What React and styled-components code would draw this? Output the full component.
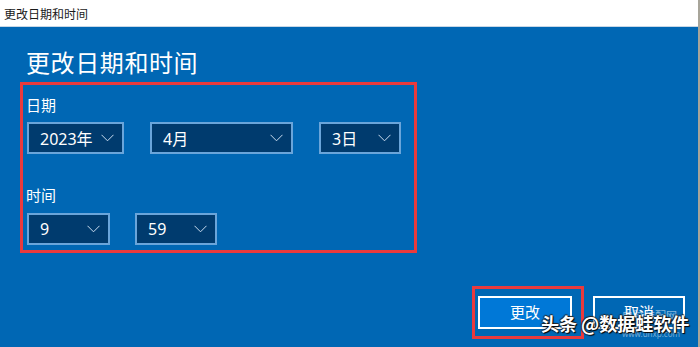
import React from 'react'
import styled, { createGlobalStyle } from 'styled-components'

const GlobalStyle = createGlobalStyle`
  html, body {
    margin: 0;
    padding: 0;
    background: #ffffff;
  }
  body {
    font-family: "Noto Sans", "Noto Sans CJK SC", sans-serif;
  }
`

const Window = styled.div`
  position: relative;
  width: 698px;
  height: 347px;
  border-right: 2px solid #a8a59a;
  display: flex;
  flex-direction: column;
  overflow: hidden;
`

const TitleBar = styled.div`
  height: 26px;
  flex: none;
  background: #ffffff;
  border-bottom: 1px solid #c7d7e6;
  display: flex;
  align-items: center;
  padding-left: 4px;
  font-family: "Noto Sans CJK SC", sans-serif;
  font-size: 12px;
  color: #1a1a1a;
`

const Body = styled.div`
  flex: 1;
  background: #0067b4;
  display: flex;
  flex-direction: column;
  color: #ffffff;
`

const Heading = styled.h1`
  margin: 18px 0 0 26px;
  font-family: "Noto Sans CJK SC", sans-serif;
  font-weight: 400;
  font-size: 24px;
  line-height: 34px;
  letter-spacing: 0.6px;
`

const Marked = styled.section`
  margin: 3px 0 0 20px;
  width: 388px;
  border: 3px solid #ea3a3d;
  padding: 10px 0 5px 3px;
  display: flex;
  flex-direction: column;
`

const Label = styled.div`
  font-family: "Noto Sans CJK SC", sans-serif;
  font-size: 15px;
  line-height: 20px;
  margin-top: ${p => p.$top || 0}px;
`

const Row = styled.div`
  display: flex;
  gap: ${p => p.$gap}px;
  margin-top: ${p => p.$top}px;
  padding-left: 1px;
`

const Select = styled.div`
  box-sizing: border-box;
  width: ${p => p.$w}px;
  height: 32px;
  background: #003b6e;
  border: 2px solid #6aa5da;
  display: flex;
  align-items: center;
  justify-content: space-between;
  padding: 0 8px 0 11px;
  font-family: "Noto Sans", "Noto Sans CJK SC", sans-serif;
  font-size: 16px;
  color: #ffffff;
`

const Chevron = () => (
  <svg width="13" height="8" viewBox="0 0 13 8">
    <path d="M0.5 0.8 L6.5 6.8 L12.5 0.8" fill="none" stroke="#c9dcef" strokeWidth="1" />
  </svg>
)

const Footer = styled.div`
  display: flex;
  align-items: center;
  justify-content: flex-end;
  gap: 9px;
  margin-top: 33px;
  padding-right: 13px;
`

const Highlight = styled.div`
  border: 3px solid #ea3a3d;
  padding: 7px 9px 7px 3px;
  display: flex;
`

const Button = styled.div`
  box-sizing: border-box;
  width: ${p => p.$w}px;
  height: 33px;
  border: 2px solid #ffffff;
  background: ${p => (p.$primary ? '#0078d7' : 'transparent')};
  display: flex;
  align-items: center;
  justify-content: center;
  padding-bottom: 2px;
  font-family: "Noto Sans CJK SC", sans-serif;
  font-size: 15px;
  color: #ffffff;
`

const Watermark = styled.div`
  position: absolute;
  left: 541px;
  top: 310px;
  font-family: "Noto Sans CJK SC", sans-serif;
  font-size: 18px;
  font-weight: 700;
  color: #ffffff;
  white-space: nowrap;
  text-shadow: 1px 1px 1px #000, -1px 0 1px #222, 0 -1px 1px #222;
`

const SiteMark = styled.div`
  position: absolute;
  left: 622px;
  top: 309px;
  font-family: "Noto Sans CJK SC", sans-serif;
  font-size: 11px;
  line-height: 12px;
  color: rgba(255, 255, 255, 0.55);
  small {
    display: block;
    font-family: "Noto Sans", sans-serif;
    font-size: 8px;
    line-height: 9px;
    padding-top: 8px;
    color: rgba(220, 230, 240, 0.55);
  }
`

export default function App() {
  return (
    <>
      <GlobalStyle />
      <Window>
        <TitleBar>更改日期和时间</TitleBar>
        <Body>
          <Heading>更改日期和时间</Heading>
          <Marked>
            <Label>日期</Label>
            <Row $gap={26} $top={7}>
              <Select $w={97}>2023年<Chevron /></Select>
              <Select $w={143}>4月<Chevron /></Select>
              <Select $w={82}>3日<Chevron /></Select>
            </Row>
            <Label $top={31}>时间</Label>
            <Row $gap={25} $top={8}>
              <Select $w={83}>9<Chevron /></Select>
              <Select $w={82}>59<Chevron /></Select>
            </Row>
          </Marked>
          <Footer>
            <Highlight>
              <Button $w={94} $primary>更改</Button>
            </Highlight>
            <Button $w={92}>取消</Button>
          </Footer>
        </Body>
        <SiteMark>电脑装配网<small>www.dnxp.com</small></SiteMark>
        <Watermark>头条 @数据蛙软件</Watermark>
      </Window>
    </>
  )
}
